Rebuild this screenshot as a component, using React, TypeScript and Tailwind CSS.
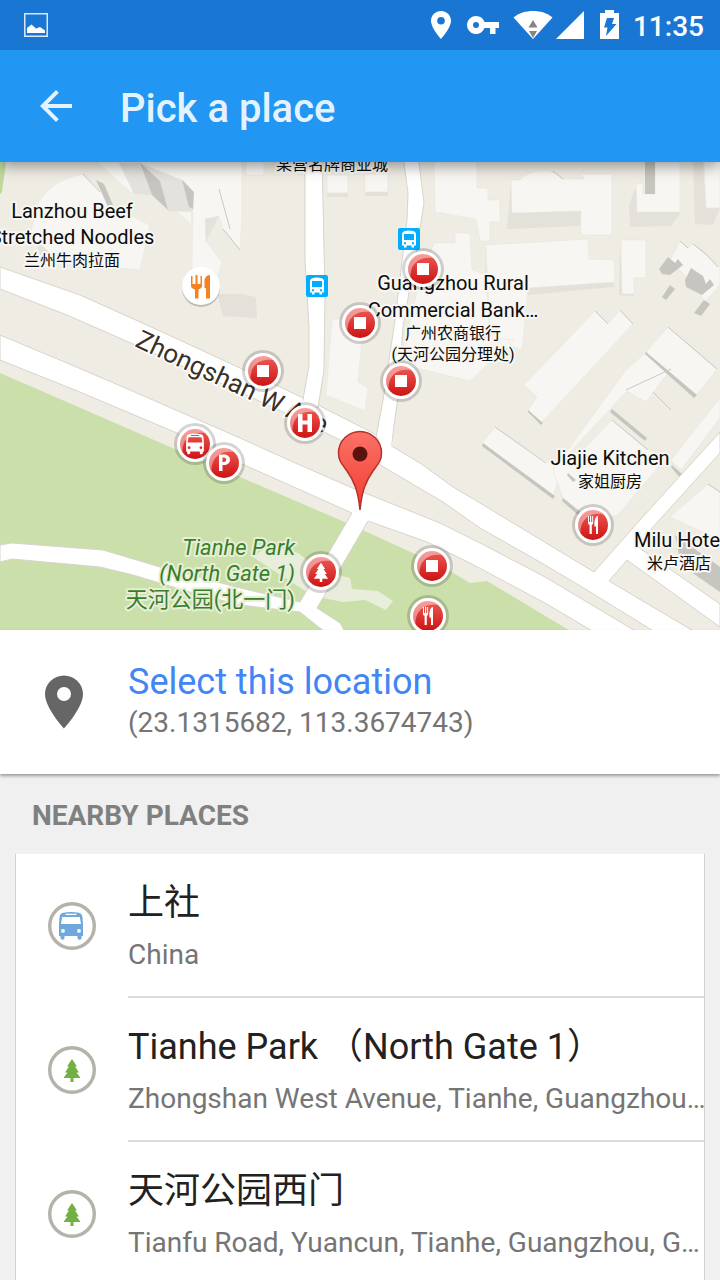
import type { ReactNode } from "react";

const FONT = "font-['Roboto','Noto_Sans_CJK_SC',sans-serif]";

function StatusBar() {
  return (
    <div className="relative z-20 flex h-[50px] shrink-0 items-center justify-between bg-[#1976d2] pl-6 pr-4 text-white">
      <svg width="24" height="24" viewBox="0 0 24 24" aria-hidden="true">
        <rect x="0.75" y="0.75" width="22.5" height="22.5" fill="none" stroke="#d9e8f7" strokeWidth="1.5" />
        <path d="M3 20V15l4.500-3.500 4.500 4 4-1.500 5 3.500V20z" fill="#fff" />
      </svg>
      <div className="flex items-center">
        <svg width="20" height="28" viewBox="0 0 20 28" aria-hidden="true">
          <path fill="#fff" fillRule="evenodd" d="M10 0C4.400 0 0 4.400 0 9.800 0 17 10 28 10 28s10-11 10-18.200C20 4.400 15.600 0 10 0zm0 6a3.700 3.700 0 1 1 0 7.600A3.700 3.700 0 0 1 10 6z" />
        </svg>
        <svg className="ml-4" width="32" height="18" viewBox="0 0 32 18" aria-hidden="true">
          <path fill="#fff" fillRule="evenodd" d="M9 0a9 9 0 1 0 8.500 12H23v6h5.500v-6H32V6H17.500A9 9 0 0 0 9 0zm0 6a3 3 0 1 1 0 6 3 3 0 0 1 0-6z" />
        </svg>
        <svg className="ml-[14px]" width="40" height="28" viewBox="0 0 40 28" aria-hidden="true">
          <path fill="#fff" d="M0.500 6.500C6 2 12.500 0 20 0s14 2 19.500 6.500L20 28z" />
          <path fill="#858585" d="M20 9l4.500 7.500h-9zM16 20h8l-4 7z" />
        </svg>
        <svg className="ml-[2px]" width="30" height="28" viewBox="0 0 30 28" aria-hidden="true">
          <path fill="#fff" d="M29 0v28H1z" />
        </svg>
        <svg className="ml-[15px]" width="20" height="30" viewBox="0 0 20 30" aria-hidden="true">
          <path fill="#fff" d="M5 0h9v3h5v26H0V3h5z" />
          <path fill="#1976d2" d="M7 8h7l-2 6H16.500L6 26 7.500 17.500H4z" />
        </svg>
        <span className="ml-[13px] mt-1 text-[28px] font-medium leading-8">11:35</span>
      </div>
    </div>
  );
}

function AppBar() {
  return (
    <header className="relative z-10 flex h-28 shrink-0 items-center bg-[#2196f3] pl-10 text-[#e3f2fd] shadow-[0_4px_14px_rgba(0,0,0,0.4)]">
      <button type="button" aria-label="Back" className="shrink-0">
        <svg width="32" height="32" viewBox="4 4 16 16" fill="currentColor" aria-hidden="true">
          <path d="M20 11H7.830l5.590-5.590L12 4l-8 8 8 8 1.410-1.410L7.830 13H20v-2z" />
        </svg>
      </button>
      <h1 className="ml-12 pt-[6px] text-[40px] font-medium leading-[48px]">Pick a place</h1>
    </header>
  );
}

type Glyph = "stop" | "hospital" | "bus" | "parking" | "tree" | "food";

function BusShape() {
  return (
    <path
      fillRule="evenodd"
      d="M-8-13.300C-3-14.300 3-14.300 8-13.300c2.500.6 3.300 2.300 3.500 5L12-2V10H10.500v2c0 2.300-4 2.300-4 0V10h-13v2c0 2.300-4 2.300-4 0V10H-12V-2l.5-6.300c.2-2.700 1-4.400 3.500-5zM-5.500-12.300v1.400h11v-1.400zM-8.800-9-10-2h20L8.800-9zM-8 3a1.900 1.900 0 1 0 0 3.800A1.900 1.900 0 0 0-8 3zM8 3a1.900 1.900 0 1 0 0 3.800A1.900 1.900 0 0 0 8 3z"
    />
  );
}

function TreeShape() {
  return <path d="M0-11l5 7.500H3l4 6H4.500L8.500 8H1.500v4h-3V8h-7l4-5.500H-7l4-6h-2z" />;
}

function ForkKnifeShape() {
  return (
    <path d="M-5-9h1v6h1v-6h1.200v6h1v-6H.2v6.500c0 1.500-.8 2-1.400 2.500V9h-2.200V0C-4.500-.5-5-1-5-2.500zM5-9V9H3V1.500H1.500C1-4 2-8.500 5-9z" />
  );
}

function MarkerGlyph({ glyph }: { glyph: Glyph }) {
  switch (glyph) {
    case "stop":
      return <rect x="-6" y="-6" width="12" height="12" />;
    case "hospital":
      return <path d="M-7-9h4.500v6.500h5V-9H7V9H2.500V1.500h-5V9H-7z" />;
    case "parking":
      return <path fillRule="evenodd" d="M-5-8.500H0c8 0 8 10.500 0 10.500h-1.500v6H-5zM-1.500-5.500V-1H0c3 0 3-4.500 0-4.500z" />;
    case "bus":
      return <g transform="scale(0.74)"><BusShape /></g>;
    case "tree":
      return <g transform="scale(0.84)"><TreeShape /></g>;
    case "food":
      return <ForkKnifeShape />;
  }
}

const markers: { x: number; y: number; glyph: Glyph }[] = [
  { x: 423, y: 269, glyph: "stop" },
  { x: 360, y: 323, glyph: "stop" },
  { x: 263, y: 371, glyph: "stop" },
  { x: 401, y: 381, glyph: "stop" },
  { x: 305, y: 423, glyph: "hospital" },
  { x: 195, y: 444, glyph: "bus" },
  { x: 224, y: 463, glyph: "parking" },
  { x: 321, y: 572, glyph: "tree" },
  { x: 432, y: 566, glyph: "stop" },
  { x: 428, y: 616, glyph: "food" },
  { x: 593, y: 525, glyph: "food" },
];

function PlaceMarker({ x, y, glyph }: { x: number; y: number; glyph: Glyph }) {
  return (
    <g transform={`translate(${x} ${y})`}>
      <circle r="21" fill="#000" fillOpacity="0.17" />
      <circle r="18" fill="#fff" />
      <circle r="15" fill="url(#marker-red)" />
      <path d="M-12.500 8.500A15 15 0 0 1 10.500-10.800C0-13-13-8-12.500 8.500z" fill="#fff" fillOpacity="0.42" />
      <g fill="#fff"><MarkerGlyph glyph={glyph} /></g>
    </g>
  );
}

function TransitStop({ x, y }: { x: number; y: number }) {
  return (
    <g transform={`translate(${x} ${y})`}>
      <rect x="-11" y="-11" width="22" height="22" rx="2" fill="#00aeff" />
      <path
        fill="#fff"
        fillRule="evenodd"
        d="M-4-8C-2-8.800 2-8.800 4-8c2 .5 3 1.500 3 3.500V6.500H5v2H2.500v-2h-5v2H-5v-2h-2V-4.500C-7-6.500-6-7.500-4-8zM-5-5v6H5V-5zM-5 3.300v1.900h2V3.300zM3 3.300v1.900h2V3.300z"
      />
    </g>
  );
}

const lowBuildings = [
  "M37 205C45 190 60 178 84 174L100 190 115 208 150 225 140 270 60 262 30 235z",
  "M97 162H118L170 200 180 215 205 235 220 290 195 262 191 212 168 211 162 195 130 192z",
  "M140 162H242V215L240 250 223 229 219 216 206 219V241L222 262 215 285 192 268 193 192 183 180 165 182z",
  "M262 162H264V175H246V162z",
  "M327 175H348V193H327zM365 174H388V192H365z",
  "M434 162H477V188H488V200H500V222H490V241H480L476 219 435 212z",
  "M511 180L520 180C530 168 555 168 562 179L584 179 581 174H612V235H581V211L512 213z",
  "M636 184H643V194H655V162H680V212H637z",
  "M704 162H720V208H706z",
  "M486 245L588 239 589 259 614 260 615 282 528 288 522 350 490 338z",
  "M621 240H646V278H634V294H622z",
  "M434 243L455 243V233H470L472 270 486 275 490 338 515 340 470 381 404 365 410 320 420 280z",
  "M332 319H364L358 382 368 388 365 411 326 395z",
  "M524 385L595 311 608 324 620 310 633 324 541 423 528 410 537 397z",
  "M495 427L548 462 565 460 553 497 482 443z",
  "M626 370L645 353 671 369 646 402 627 391 560 463 566 467 612 420 646 448 666 458 618 515 592 520 563 498 553 470z",
  "M668 327L717 369 695 397 645 353z",
  "M680 241L688 248 693 244 720 267V285L705 302 695 285 680 270 670 260z",
  "M720 398V418L681 470 671 460z",
  "M708 484L720 492V540L670 517z",
];

const shadedWalls = [
  "M511 181L507 229 580 226 582 211 512 213z",
  "M637 184L629 205 630 227 671 226 681 212H637z",
  "M693 162L703 162 706 208H720L713 225 695 224z",
  "M486 246L485 284 528 295 614 287V282L530 287 487 282z",
  "M620 242L619 295 634 296V292L622 294z",
  "M217 294L242 294 256 297 257 318 223 316z",
  "M35 240L55 248 55 268 43 262z",
];

const darkWalls = [
  "M96 180L104 184 113 205 108 207z",
  "M140 163L160 181 168 210 152 195z",
  "M182 180L194 192 193 209 189 207z",
  "M645 162H655V194H645z",
  "M659 269L668 257 675 263 678 259 683 265 670 275 662 274z",
  "M691 268L703 276 706 284 710 279 714 285 702 295 686 287 685 280z",
  "M662 297L670 285 675 289 666 300zM694 313L704 300 710 304 701 316z",
  "M646 352L697 395 694 398 645 354z",
  "M483 443L555 496 553 499 482 446z",
  "M612 409L647 438 645 441 610 412z",
  "M563 498L580 512 578 515 562 501z",
  "M528 410L543 423 541 425 528 412z",
  "M568 473L576 480 573 482 567 475z",
  "M672 465L683 475 680 478 671 467z",
  "M675 535L720 567V592L681 565z",
];

const buildingEdges =
  "M595 311L608 324M620 310L633 324M668 327L717 369M495 427L546 463M626 390L671 369M612 420L648 450M653 392L671 410M680 241L688 248M693 244L706 254 718 267M83 174L100 192M553 171L563 179M223 229L240 250M219 189L230 229M708 484L720 492";

const roads = [
  "M0 267L80 295 160 331 240 368 320 406 373 433 390 445 420 463 453 487 470 497 594 572 640 520 720 432V453L653 527 638 547 720 604V627L627 560 609 581 695 632H655L587 590 540 562 480 528 443 502 382 466 340 440 300 420 240 392 133 344 67 315 0 289z",
  "M0 335L67 363 130 390 240 438 293 462 350 487 440 523 480 543 545 577 637 632H594L545 603 470 563 427 542 368 521 317 608 340 623 345 632H325L300 612 240 605 190 592 133 575 100 567 12 559 0 562V545L12 543 103 550 160 567 240 588 300 602 352 513 240 463 177 433 75 390 0 360z",
  "M305 155V260L309 327V365L303 400 318 408 324 370 325 293 322 155z",
  "M403 155L408 193 407 220 395 320 383 400 376 437 391 447 398 397 403 327 417 247 424 203 418 155z",
];

function Label({ x, y, size, anchor = "middle", children }: { x: number; y: number; size: number; anchor?: "middle" | "start" | "end"; children: ReactNode }) {
  return (
    <text x={x} y={y} fontSize={size} textAnchor={anchor}>
      {children}
    </text>
  );
}

function MapView() {
  return (
    <div className="aspect-[720/468] w-full shrink-0 overflow-hidden bg-[#efece4]">
      <svg className="block h-full w-full" viewBox="0 162 720 468" role="img" aria-label="Map around Tianhe Park">
        <defs>
          <linearGradient id="marker-red" x1="0" y1="0" x2="0" y2="1">
            <stop offset="0" stopColor="#ef5a54" />
            <stop offset="1" stopColor="#cc1414" />
          </linearGradient>
          <linearGradient id="pin-red" x1="0" y1="0" x2="0" y2="1">
            <stop offset="0" stopColor="#fb7268" />
            <stop offset="1" stopColor="#f23a30" />
          </linearGradient>
        </defs>
        <rect y="162" width="720" height="468" fill="#efece4" />
        <path d="M0 162H6L2 192 0 194z" fill="#bfd99d" />
        <g fill="#e3e1d9">
          {shadedWalls.map((d) => <path key={d} d={d} />)}
          <path d="M327 193H348V197H327zM365 192H388V196H365z" />
        </g>
        <g fill="#f7f6f2" stroke="#e8e6de" strokeWidth="0.6">
          {lowBuildings.map((d) => <path key={d} d={d} />)}
        </g>
        <g fill="#e3e2dc">
          <path d="M119 163L139 163 152 195 134 194zM140 163L182 180 192 211H169zM205 219L219 216 206 241z" />
        </g>
        <g fill="#c7c5bf">
          {darkWalls.map((d) => <path key={d} d={d} />)}
        </g>
        <path d={buildingEdges} fill="none" stroke="#c9c8c2" strokeWidth="1" />
        <path d="M0 373L60 399 177 450 240 477 347 523 413 553 450 571 470 583 487 581 572 632H0z" fill="#cbdfaa" />
        <path d="M253 557L270 545 298 553 320 570 350 578 352 589 378 591 393 601 386 610 365 600 343 602 323 598 310 594z" fill="#e8eedb" />
        <g fill="#fff" stroke="#d8d4cb" strokeWidth="1">
          {roads.map((d) => <path key={d} d={d} />)}
        </g>
        <path d="M305 392h13l-2 18h-14zM382 425h11l-2 26h-13z" fill="#fff" />

        <g>
          <circle cx="201" cy="288" r="19" fill="#000" fillOpacity="0.2" />
          <circle cx="201" cy="286" r="19" fill="#fff" />
          <path fill="#f58220" d="M191 276h1.500v8h3v-9h2v9h3v-8h1.500v10c0 2-2 3-3.500 3.500V298.500h-3.500v-9C193 289 191 288 191 286zM210 275v23.500h-4V288h-1.500V281c0-3 2-6 5.500-6z" />
        </g>
        <TransitStop x={317} y={286} />
        <TransitStop x={409} y={239} />

        <g fill="#0c0c0c" stroke="#f7f6f2" strokeWidth="4" strokeLinejoin="round" paintOrder="stroke">
          <Label x={332} y={170} size={16}>某营名牌商业城</Label>
          <Label x={72} y={218} size={20}>Lanzhou Beef</Label>
          <Label x={72} y={244} size={20}>Stretched Noodles</Label>
          <Label x={72} y={266} size={16}>兰州牛肉拉面</Label>
          <Label x={453} y={290} size={20}>Guangzhou Rural</Label>
          <Label x={453} y={317} size={20}>Commercial Bank…</Label>
          <Label x={453} y={339} size={16}>广州农商银行</Label>
          <Label x={453} y={360} size={16}>(天河公园分理处)</Label>
          <Label x={610} y={465} size={20}>Jiajie Kitchen</Label>
          <Label x={610} y={487} size={16}>家姐厨房</Label>
          <Label x={634} y={547} size={20} anchor="start">Milu Hotel</Label>
          <Label x={679} y={569} size={16}>米卢酒店</Label>
        </g>
        <g fill="#3a7d2b" stroke="#e6efd6" strokeWidth="4" strokeLinejoin="round" paintOrder="stroke">
          <g fontStyle="italic">
            <Label x={295} y={555} size={22} anchor="end">Tianhe Park</Label>
            <Label x={295} y={581} size={22} anchor="end">(North Gate 1)</Label>
          </g>
          <Label x={295} y={607} size={22} anchor="end">天河公园(北一门)</Label>
        </g>
        <text transform="translate(134 346) rotate(25)" fontSize="26" fill="#3a3028" stroke="#fff" strokeWidth="3" paintOrder="stroke">
          Zhongshan W Ave
        </text>

        {markers.map((m) => <PlaceMarker key={`${m.x}-${m.y}`} {...m} />)}

        <path
          d="M360 510C358 490 354 481 347 471 341 463 338.500 460 338.500 453A21.500 21.500 0 0 1 381.500 453C381.500 460 379 463 373 471 366 481 362 490 360 510z"
          fill="url(#pin-red)"
          stroke="#b5322b"
          strokeWidth="1.500"
        />
        <circle cx="360" cy="454" r="7.500" fill="#5c1310" />
      </svg>
    </div>
  );
}

function SelectLocation() {
  return (
    <button
      type="button"
      className="relative z-10 flex h-36 w-full shrink-0 items-center bg-white pl-11 pr-4 text-left shadow-[0_2px_3px_rgba(0,0,0,0.35)]"
    >
      <svg className="shrink-0" width="40" height="54" viewBox="0 0 40 54" aria-hidden="true">
        <path fill="#666" fillRule="evenodd" d="M20 0.500C9.500 0.500 1 8.800 1 19 1 33 20 53.500 20 53.500S39 33 39 19C39 8.800 30.500 0.500 20 0.500zm0 11.500a7 7 0 1 1 0 14 7 7 0 0 1 0-14z" />
      </svg>
      <span className="ml-11 flex min-w-0 flex-col">
        <span className="truncate text-[36px] leading-[42px] text-[#4285f4]">Select this location</span>
        <span className="truncate text-[28px] leading-10 text-[#757575]">(23.1315682, 113.3674743)</span>
      </span>
    </button>
  );
}

const places = [
  { name: "上社", address: "China", kind: "bus" },
  { name: "Tianhe Park （North Gate 1）", address: "Zhongshan West Avenue, Tianhe, Guangzhou, Guangdong, China", kind: "tree" },
  { name: "天河公园西门", address: "Tianfu Road, Yuancun, Tianhe, Guangzhou, Guangdong, China", kind: "tree" },
];

function PlaceIcon({ kind }: { kind: string }) {
  return (
    <svg className="shrink-0" width="48" height="48" viewBox="-24 -24 48 48" aria-hidden="true">
      <circle r="22.300" fill="#fff" stroke="#b5b2aa" strokeWidth="3.400" />
      {kind === "bus" ? <g fill="#6fa8dc" transform="translate(-1 0)"><BusShape /></g> : <g fill="#72b043"><TreeShape /></g>}
    </svg>
  );
}

function NearbyPlaces() {
  return (
    <section className="min-h-0 flex-1 overflow-y-auto [scrollbar-width:none]">
      <h2 className="px-8 pb-[22px] pt-[25px] text-[28px] font-bold leading-[33px] text-[#808080]">NEARBY PLACES</h2>
      <ul className="mx-4">
        {places.map((place) => (
          <li key={place.name} className="bg-white shadow-[-1px_0_0_#d2d2d2,1px_0_0_#d2d2d2]">
            <button type="button" className="flex h-36 w-full items-center pl-8 text-left">
              <PlaceIcon kind={place.kind} />
              <span className="ml-8 flex h-full min-w-0 flex-1 flex-col gap-[14px] border-b-2 border-[#dcdcdc] pt-7">
                <span className="truncate text-[36px] leading-[42px] text-[#212121]">{place.name}</span>
                <span className="-mr-1 truncate text-[28px] leading-[34px] text-[#757575]">{place.address}</span>
              </span>
            </button>
          </li>
        ))}
      </ul>
    </section>
  );
}

export default function App() {
  return (
    <main className={`flex h-screen flex-col overflow-hidden bg-[#f0f0f0] ${FONT}`}>
      <StatusBar />
      <AppBar />
      <MapView />
      <SelectLocation />
      <NearbyPlaces />
    </main>
  );
}
